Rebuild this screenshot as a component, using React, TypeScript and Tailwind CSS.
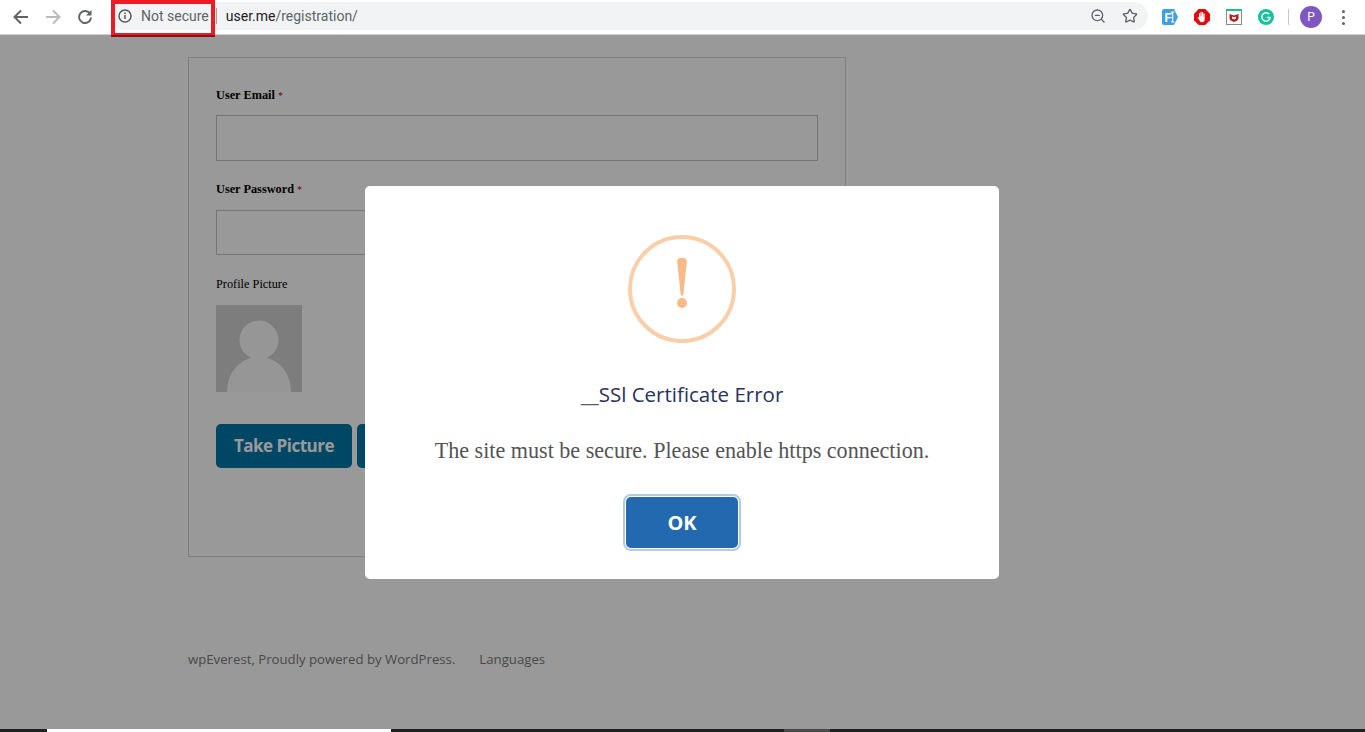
import React from 'react';
import { ZoomOut, Star } from 'lucide-react';

const ToolbarIcons = () => (
    <div className="flex items-center w-[110px] shrink-0">
        <svg width="16" height="16" viewBox="0 0 16 16" className="ml-[13px]" fill="none" stroke="#5f6368" strokeWidth="2">
            <path d="M15 8H2M8 1.5 1.5 8 8 14.5" />
        </svg>
        <svg width="16" height="16" viewBox="0 0 16 16" className="ml-[16px]" fill="none" stroke="#b9bbbe" strokeWidth="2">
            <path d="M1 8h13M8 1.5 14.5 8 8 14.5" />
        </svg>
        <svg width="16" height="16" viewBox="0 0 16 16" className="ml-[16px]" fill="none" stroke="#5f6368" strokeWidth="2">
            <path d="M13.2 5A6 6 0 1 0 14 8.5" />
            <path d="M14.5 1v5.5H9" fill="#5f6368" stroke="none" />
        </svg>
    </div>
);

const Extensions = () => (
    <div className="flex items-center shrink-0">
        <svg width="16" height="16" viewBox="0 0 16 16" className="ml-[14px]">
            <path d="M2 0h10l4 8-4 8H2a2 2 0 0 1-2-2V2a2 2 0 0 1 2-2z" fill="#3f9fe0" />
            <text x="2.5" y="12.5" fontSize="12" fontWeight="700" fill="#fff" fontFamily="Liberation Sans, sans-serif">F</text>
            <path d="M9 3h3.4M10.7 3v10M9 13h3.4" stroke="#fff" strokeWidth="1.1" fill="none" />
        </svg>
        <svg width="16" height="16" viewBox="0 0 16 16" className="ml-[16px]">
            <path d="M4.7 0h6.6L16 4.7v6.6L11.3 16H4.7L0 11.3V4.7z" fill="#e30b0b" />
            <path d="M5 8V4.6a.6.6 0 0 1 1.2 0V7.5h.3V3.4a.6.6 0 0 1 1.2 0V7.5H8V3.6a.6.6 0 0 1 1.2 0V7.7h.3V5a.6.6 0 0 1 1.2 0v5.2c0 1.8-1 3-2.7 3-1.5 0-2.3-.9-2.8-2.1L3.6 8.7l.8-.4z" fill="#fff" />
        </svg>
        <svg width="16" height="16" viewBox="0 0 16 16" className="ml-[16px]">
            <rect x=".5" y=".5" width="15" height="15" fill="#fff" stroke="#8a8a8a" />
            <rect width="16" height="2" fill="#19c37d" />
            <path d="M3.5 5 8 6.5 12.5 5v4.2c0 1.7-2 2.8-4.5 3.8-2.5-1-4.5-2.1-4.5-3.8z" fill="#b71c1c" />
            <path d="M6 7.5v2L8 10.6l2-1.1v-2L8 8.3z" fill="#fff" />
        </svg>
        <svg width="16" height="16" viewBox="0 0 16 16" className="ml-[16px]">
            <circle cx="8" cy="8" r="8" fill="#15c39a" />
            <path d="M11.3 5.3A4.2 4.2 0 1 0 12.2 8.6H8.8" fill="none" stroke="#fff" strokeWidth="1.5" />
        </svg>
        <div className="ml-[14px] w-px h-[16px] bg-[#c6c8cb]" />
        <div className="ml-[11px] w-[22px] h-[22px] rounded-full bg-[#7e57c2] text-white text-[12px] leading-[22px] text-center font-['Roboto',sans-serif]">P</div>
        <div className="ml-[20px] mr-[20px] flex flex-col gap-[3px]">
            <div className="w-[3px] h-[3px] rounded-full bg-[#5f6368]" />
            <div className="w-[3px] h-[3px] rounded-full bg-[#5f6368]" />
            <div className="w-[3px] h-[3px] rounded-full bg-[#5f6368]" />
        </div>
    </div>
);

const BrowserBar = () => (
    <div className="relative h-[35px] shrink-0 bg-white flex items-center border-b border-[#d0d1d2]">
        <ToolbarIcons />
        <div className="flex-1 h-[28px] mb-[2px] rounded-full bg-[#f1f3f4] flex items-center">
            <svg width="14" height="14" viewBox="0 0 14 14" className="ml-[8px]" fill="none" stroke="#55595e" strokeWidth="1.5">
                <circle cx="7" cy="7" r="6" />
                <path d="M7 6v4M7 3.4v1.5" />
            </svg>
            <span className="ml-[9px] text-[14px] text-[#5f6368] font-['Roboto',sans-serif]">Not secure</span>
            <div className="ml-[7px] w-px h-[16px] bg-[#9aa0a6]" />
            <span className="ml-[9px] text-[14px] text-[#202124] font-['Roboto',sans-serif]">user.me<span className="text-[#5f6368]">/registration/</span></span>
            <ZoomOut size={16} className="ml-auto text-[#5f6368]" />
            <Star size={16} className="ml-[16px] mr-[10px] text-[#5f6368]" />
        </div>
        <Extensions />
        {/* red annotation box from the original screenshot */}
        <div className="absolute left-[111px] top-0 w-[104px] h-[37px] border-[4px] border-[#ed1c24]" />
    </div>
);

const Field = ({ label, mt }: { label: string; mt: string }) => (
    <div className={mt}>
        <div className="text-[12.3px] leading-[14px] font-bold text-black">
            {label} <span className="text-[#c00] text-[10px] leading-none font-normal">*</span>
        </div>
    </div>
);

const Avatar = () => (
    <div className="mt-[14px] w-[86px] h-[87px] bg-[#d0d0d0] overflow-hidden">
        <svg width="86" height="87" viewBox="0 0 86 87">
            <circle cx="43" cy="35" r="19.5" fill="#fafafa" />
            <path d="M11 87C11 66 25 52 43 52s32 14 32 35z" fill="#fafafa" />
        </svg>
    </div>
);

const RegistrationForm = () => (
    <div className="ml-[188px] mt-[22px] w-[658px] h-[500px] border border-[#d3d3d3] pl-[27px] font-['Liberation_Serif',serif]">
        <Field label="User Email" mt="mt-[30px]" />
        <div className="mt-[13px] w-[602px] h-[46px] border border-[#c4c4c4]" />
        <Field label="User Password" mt="mt-[21px]" />
        <div className="mt-[14px] w-[602px] h-[45px] border border-[#c4c4c4]" />
        <div className="mt-[22px] text-[12.3px] leading-[14px] text-black">Profile Picture</div>
        <Avatar />
        <div className="mt-[32px] flex gap-[5px] font-['Open_Sans',sans-serif]">
            <button className="w-[136px] h-[44px] rounded-[5px] bg-[#0075a9] text-white text-[17px] tracking-[-0.5px] font-bold">Take Picture</button>
            <button className="w-[136px] h-[44px] rounded-[5px] bg-[#0075a9] text-white text-[17px] font-bold" />
        </div>
    </div>
);

const Footer = () => (
    <div className="ml-[188px] mt-[93px] flex gap-[24px] text-[13.2px] leading-[18px] text-[#7a7a7a] font-['Open_Sans',sans-serif]">
        <span>wpEverest, Proudly powered by WordPress.</span>
        <span>Languages</span>
    </div>
);

const ErrorModal = () => (
    <div className="absolute left-[365px] top-[151px] w-[634px] h-[393px] bg-white rounded-[5px] flex flex-col items-center">
        <div className="mt-[49px] w-[108px] h-[108px] rounded-full border-[4px] border-[#facea8] flex flex-col items-center justify-center pb-[13px]">
            <div className="w-[10px] h-[38px] bg-[#f8bb86] [clip-path:polygon(0_8%,25%_0,75%_0,100%_8%,62%_100%,38%_100%)]" />
            <div className="mt-[2px] w-[10px] h-[10px] rounded-full bg-[#f8bb86]" />
        </div>
        <h2 className="mt-[36px] text-[20.5px] leading-[30px] font-medium text-[#2a3259] font-['Open_Sans',sans-serif]"><span className="text-[#595959]">__</span>SSl Certificate Error</h2>
        <p className="mt-[26px] text-[22.1px] leading-[32px] text-[#545454] font-['Liberation_Serif',serif]">The site must be secure. Please enable https connection.</p>
        <button className="mt-[30px] w-[112px] h-[51px] rounded-[5px] bg-[#2269b0] text-white text-[20px] font-bold ring-[2px] ring-offset-[1px] ring-[#b4cadf] font-['Open_Sans',sans-serif]">OK</button>
    </div>
);

export default function App() {
    return (
        <div className="h-[732px] w-full flex flex-col overflow-hidden bg-white">
            <BrowserBar />
            <div className="relative flex-1 overflow-hidden">
                <RegistrationForm />
                <Footer />
                <div className="absolute inset-0 bg-black/40" />
                <ErrorModal />
            </div>
            <div className="h-[3px] shrink-0 bg-[#1f1f1f] flex">
                <div className="ml-[47px] w-[344px] bg-white" />
                <div className="ml-[393px] w-[46px] bg-[#4a4a4a]" />
            </div>
        </div>
    );
}
